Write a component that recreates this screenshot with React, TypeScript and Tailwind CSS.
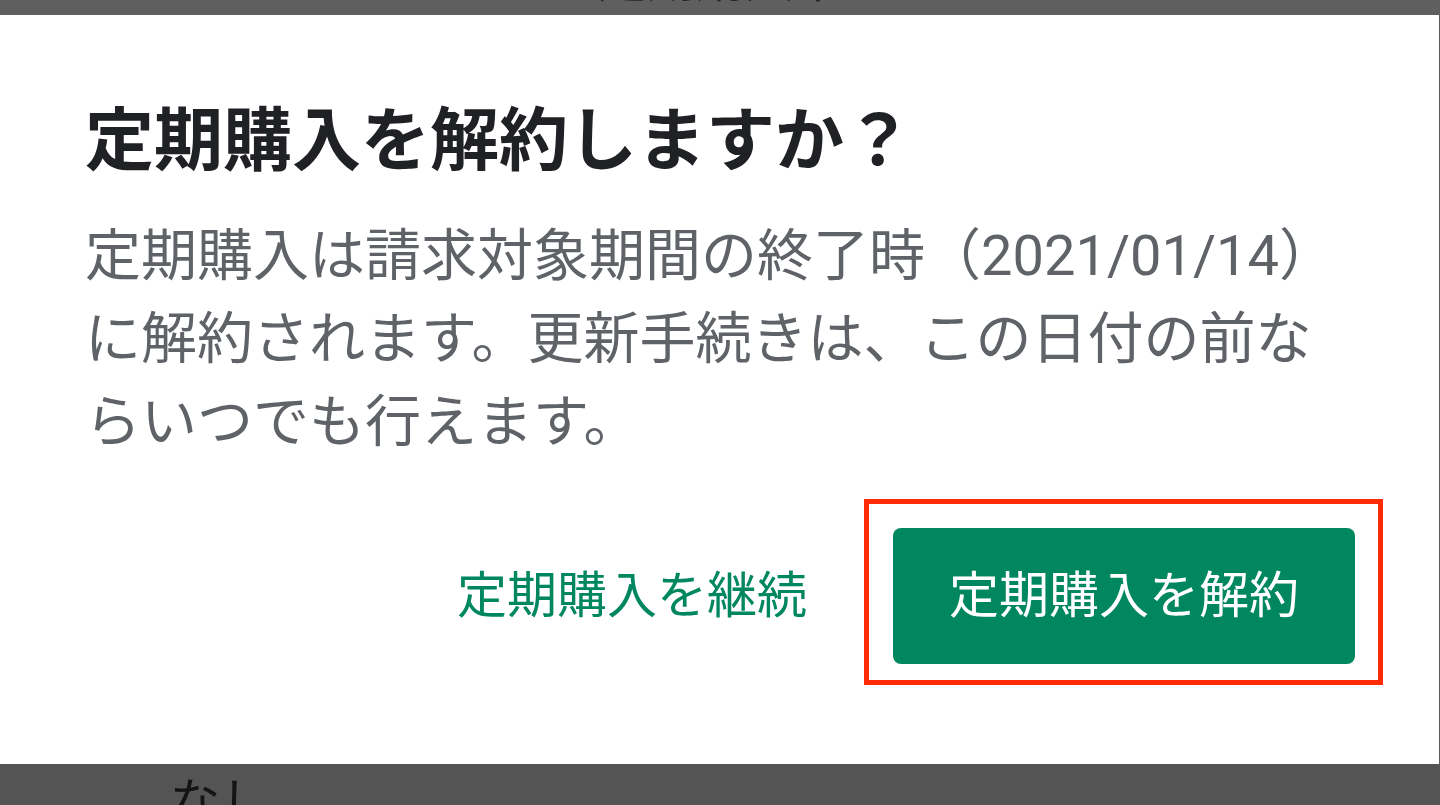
import React from 'react';

export default function App() {
  return (
    <div className="w-[1440px] h-[805px] overflow-hidden flex flex-col bg-[#5a5a5a] font-['Roboto','Noto_Sans_CJK_JP',sans-serif]">
      {/* scrim over page behind the dialog */}
      <div className="h-[15px] shrink-0 overflow-hidden bg-[#5f5f5f] flex justify-center">
        <div className="-mt-[44px] text-[49px] leading-[50px] text-[#262626] whitespace-nowrap">
          定期購入中
        </div>
      </div>

      <div className="flex h-[749px] shrink-0">
        <div className="w-[1439px] bg-white flex flex-col pl-[85px] pr-[84px] pt-[85px]">
          <h2 className="text-[69px] leading-[84px] font-bold text-[#202124] whitespace-nowrap">
            定期購入を解約しますか？
          </h2>
          <p className="mt-[31px] text-[56px] leading-[83px] text-[#5f6368] whitespace-nowrap">
            定期購入は請求対象期間の終了時（2021/01/14）
            <br />
            に解約されます。更新手続きは、この日付の前な
            <br />
            らいつでも行えます。
          </p>

          <div className="mt-[64px] flex items-center justify-end gap-[58px]">
            <button className="h-[136px] px-[28px] text-[50px] text-[#01875f] whitespace-nowrap">
              定期購入を継続
            </button>
            <div className="relative">
              <button className="w-[462px] h-[136px] rounded-[8px] bg-[#01875f] text-white text-[50px] flex items-center justify-center whitespace-nowrap">
                定期購入を解約
              </button>
              <div className="absolute -left-[29px] -top-[29px] -right-[28px] -bottom-[21px] border-[5px] border-[#ff2a00] pointer-events-none" />
            </div>
          </div>
        </div>
      </div>

      <div className="flex-1 bg-[#545454] pl-[170px] pt-[14px]">
        <div className="text-[50px] leading-[50px] text-[#141414] whitespace-nowrap">なし</div>
      </div>
    </div>
  );
}
